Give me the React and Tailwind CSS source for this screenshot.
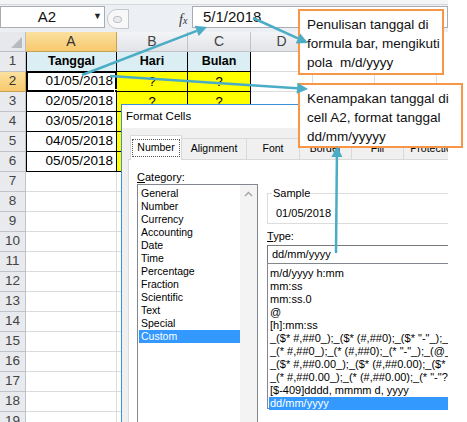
import React from "react";

const columns = [
  { name: "A", width: "w-[91px]" },
  { name: "B", width: "w-[71px]" },
  { name: "C", width: "w-[63px]" },
  { name: "D", width: "w-[62px]" },
  { name: "E", width: "w-[62px]" },
  { name: "F", width: "w-[62px]" },
];

const sheetData = {
  1: ["Tanggal", "Hari", "Bulan"],
  2: ["01/05/2018", "?", "?"],
  3: ["02/05/2018", "?", "?"],
  4: ["03/05/2018", "?", "?"],
  5: ["04/05/2018", "?", "?"],
  6: ["05/05/2018", "?", "?"],
};

const categories = [
  "General", "Number", "Currency", "Accounting", "Date", "Time",
  "Percentage", "Fraction", "Scientific", "Text", "Special", "Custom",
];

const formats = [
  "m/d/yyyy h:mm",
  "mm:ss",
  "mm:ss.0",
  "@",
  "[h]:mm:ss",
  '_($* #,##0_);_($* (#,##0);_($* "-"_);_(@_)',
  '_(* #,##0_);_(* (#,##0);_(* "-"_);_(@_)',
  '_($* #,##0.00_);_($* (#,##0.00);_($* "-"??_);_(@_)',
  '_(* #,##0.00_);_(* (#,##0.00);_(* "-"??_);_(@_)',
  "[$-409]dddd, mmmm d, yyyy",
  "dd/mm/yyyy",
];

const tabs = [
  { label: "Alignment", width: "w-[66px]" },
  { label: "Font", width: "w-[54px]" },
  { label: "Border", width: "w-[53px]" },
  { label: "Fill", width: "w-[53px]" },
  { label: "Protection", width: "w-[62px]" },
];

function cellClass(row, col) {
  if (row === 1 && col === 0) return "bg-[#daeef3] font-bold text-[12.5px] justify-center border-l border-r border-b border-black";
  if (row === 1 && col < 3) return "bg-[#daeef3] font-bold text-[12.5px] justify-center border-r border-b border-black";
  if (row >= 2 && row <= 6 && col === 0) return "bg-white text-[13.5px] justify-end pr-[3px] border-l border-r border-b border-black";
  if (row >= 2 && row <= 6 && col < 3) return "bg-[#ffff00] text-[13px] justify-center border-r border-b border-black";
  return "bg-white border-r border-b border-[#dadcdd]";
}

function Arrow({ x1, y1, x2, y2 }) {
  const dx = x2 - x1;
  const dy = y2 - y1;
  const len = Math.hypot(dx, dy);
  const ux = dx / len;
  const uy = dy / len;
  const bx = x2 - ux * 11;
  const by = y2 - uy * 11;
  const px = -uy * 5.5;
  const py = ux * 5.5;
  return (
    <g>
      <line x1={x1} y1={y1} x2={bx} y2={by} stroke="#4bacc6" strokeWidth="2.5" />
      <polygon points={`${x2},${y2} ${bx + px},${by + py} ${bx - px},${by - py}`} fill="#4bacc6" />
    </g>
  );
}

function FormulaBar() {
  return (
    <>
      <div className="h-[5px] bg-[#f4f5f7] border-b border-[#d5d8dc]" />
      <div className="flex h-[27px] bg-[#eceff3] pt-[1px]">
        <div className="relative flex h-[22px] w-[105px] items-center border border-[#a9adb3] bg-white">
          <span className="w-[92px] text-center text-[15px] text-[#111]">A2</span>
          <span className="text-[9px] text-[#222]">▼</span>
        </div>
        <div className="flex w-[87px] items-center">
          <div className="ml-[2px] flex h-[20px] w-[22px] items-center rounded-l-full border border-[#c3c7cc] bg-[#f8f8f8] pl-[5px]">
            <div className="h-[7px] w-[9px] rounded-full border border-[#b8bcc1] bg-[#e9ebee]" />
          </div>
          <span className="ml-[50px] font-['Liberation_Serif',serif] text-[14px] italic text-[#333]">
            f<span className="text-[10px]">x</span>
          </span>
        </div>
        <div className="flex h-[22px] flex-1 items-center border border-[#a9adb3] bg-white pl-[10px] text-[15px] text-[#111]">
          5/1/2018
        </div>
      </div>
    </>
  );
}

function Sheet() {
  const rows = Array.from({ length: 19 }, (_, i) => i + 1);
  return (
    <div className="flex flex-col">
      <div className="flex h-[20px]">
        <div className="flex w-[26px] shrink-0 items-end justify-end border-r border-b border-[#b9bec5] bg-[#e6e8eb] pr-[3px] pb-[3px]">
          <svg width="11" height="11" viewBox="0 0 11 11">
            <polygon points="11,0 11,11 0,11" fill="#b7bbc1" />
          </svg>
        </div>
        {columns.map((c) => (
          <div
            key={c.name}
            className={
              c.name === "A"
                ? "flex w-[91px] shrink-0 items-center justify-center border-r border-b border-[#c5a15a] bg-gradient-to-b from-[#fbe0a0] to-[#f7c96b] text-[14px] text-[#333]"
                : `flex ${c.width} shrink-0 items-center justify-center border-r border-b border-[#c0c4ca] bg-gradient-to-b from-[#f3f4f6] to-[#e2e4e8] text-[14px] text-[#444]`
            }
          >
            {c.name}
          </div>
        ))}
      </div>
      {rows.map((r) => (
        <div key={r} className="flex h-[20px]">
          <div
            className={
              r === 2
                ? "flex w-[26px] shrink-0 items-center justify-center border-r border-b border-[#c5a15a] bg-gradient-to-b from-[#fbe0a0] to-[#f7c96b] text-[13.5px] text-[#333]"
                : "flex w-[26px] shrink-0 items-center justify-center border-r border-b border-[#c0c4ca] bg-[#e8eaed] text-[13.5px] text-[#444]"
            }
          >
            {r}
          </div>
          {columns.map((c, ci) => (
            <div key={c.name} className={`relative flex ${c.width} shrink-0 items-center ${cellClass(r, ci)}`}>
              {sheetData[r] && ci < 3 ? sheetData[r][ci] : ""}
              {r === 2 && ci === 0 && (
                <>
                  <div className="pointer-events-none absolute -top-px -left-px -right-px -bottom-px border-2 border-black" />
                  <div className="absolute -right-[4px] -bottom-[4px] h-[6px] w-[6px] border border-white bg-black" />
                </>
              )}
            </div>
          ))}
        </div>
      ))}
    </div>
  );
}

function FormatCellsDialog() {
  return (
    <div className="absolute left-[121px] top-[104px] h-[340px] w-[345px] border border-[#3d8fd6] bg-[#f0f0f0] font-['Liberation_Sans',Arial,sans-serif] text-black">
      <div className="flex h-[23px] items-center bg-white pl-[4px] text-[11.5px]">Format Cells</div>
      <div className="flex h-[31px] items-end pl-[8px] text-[10.5px]">
        <div className="relative z-10 -mb-px flex h-[25px] w-[52px] items-center justify-center border border-b-0 border-[#d9d9d9] bg-white">
          <div className="flex h-[18px] w-[48px] items-center justify-center border border-dotted border-[#555]">Number</div>
        </div>
        {tabs.map((t) => (
          <div
            key={t.label}
            className={`-ml-px flex h-[21px] ${t.width} shrink-0 items-center justify-center border border-b-0 border-[#d9d9d9] bg-[#f0f0f0]`}
          >
            {t.label}
          </div>
        ))}
      </div>
      <div className="ml-[6px] flex h-[300px] border border-[#d9d9d9] bg-white pl-[8px]">
        <div className="flex w-[121px] shrink-0 flex-col pt-[10px]">
          <div className="h-[14px] text-[11px] leading-[14px]">
            <span className="underline">C</span>ategory:
          </div>
          <div className="flex h-[260px] border border-[#828790] bg-white">
            <div className="w-[102px] pt-[2px] pl-[1px] text-[10.5px] leading-[13px]">
              {categories.map((c) =>
                c === "Custom" ? (
                  <div key={c} className="bg-[#3399ff] pl-[2px] text-white">{c}</div>
                ) : (
                  <div key={c} className="pl-[2px]">{c}</div>
                )
              )}
            </div>
            <div className="flex flex-1 justify-center bg-[#f3f3f3] pt-[6px]">
              <svg width="9" height="6" viewBox="0 0 9 6">
                <path d="M1 5 L4.5 1.5 L8 5" fill="none" stroke="#a3a3a3" strokeWidth="1.4" />
              </svg>
            </div>
          </div>
        </div>
        <div className="ml-[9px] flex w-[200px] shrink-0 flex-col pt-[33px] text-[11px]">
          <div className="relative h-[31px] border border-[#dcdcdc] pl-[8px] pt-[12px] leading-[14px]">
            <span className="absolute -top-[8px] left-[4px] bg-white px-[1px] leading-[14px]">Sample</span>
            01/05/2018
          </div>
          <div className="mt-[5px] h-[14px] leading-[14px]">
            <span className="underline">T</span>ype:
          </div>
          <div className="mt-[2px] flex h-[19px] items-center border border-[#7a7a7a] pl-[4px]">dd/mm/yyyy</div>
          <div className="-mt-px h-[146px] border border-[#828790] pt-[3px] pl-[1px] leading-[13px]">
            {formats.map((f) =>
              f === "dd/mm/yyyy" ? (
                <div key={f} className="whitespace-nowrap bg-[#3399ff] pl-[1px] text-white">{f}</div>
              ) : (
                <div key={f} className="whitespace-nowrap pl-[1px]">{f}</div>
              )
            )}
          </div>
        </div>
      </div>
    </div>
  );
}

export default function App() {
  return (
    <div className="relative h-[422px] w-[467px] overflow-hidden bg-white font-['Liberation_Sans',Arial,sans-serif]">
      <div className="relative h-[422px] w-[448px] overflow-hidden bg-white text-black">
        <FormulaBar />
        <Sheet />
        <FormatCellsDialog />
      </div>

      <div className="absolute left-[298px] top-[9px] h-[66px] w-[146px] border-2 border-[#f79646] bg-white pl-[7px] pt-[4px] text-[13.5px] leading-[19px] text-[#111]">
        Penulisan tanggal di
        <br />
        formula bar, mengikuti
        <br />
        pola&nbsp; m/d/yyyy
      </div>
      <div className="absolute left-[298px] top-[83px] h-[65px] w-[165px] border-2 border-[#f79646] bg-white pl-[7px] pt-[4px] text-[13.5px] leading-[19px] text-[#111]">
        Kenampakan tanggal di
        <br />
        cell A2, format tanggal
        <br />
        dd/mm/yyyyy
      </div>

      <svg className="pointer-events-none absolute left-0 top-0" width="467" height="422">
        <Arrow x1={82} y1={75} x2={207} y2={27} />
        <Arrow x1={253} y1={18} x2={308} y2={43} />
        <Arrow x1={110} y1={76} x2={308} y2={89} />
        <Arrow x1={336} y1={253} x2={337} y2={146} />
      </svg>
    </div>
  );
}
